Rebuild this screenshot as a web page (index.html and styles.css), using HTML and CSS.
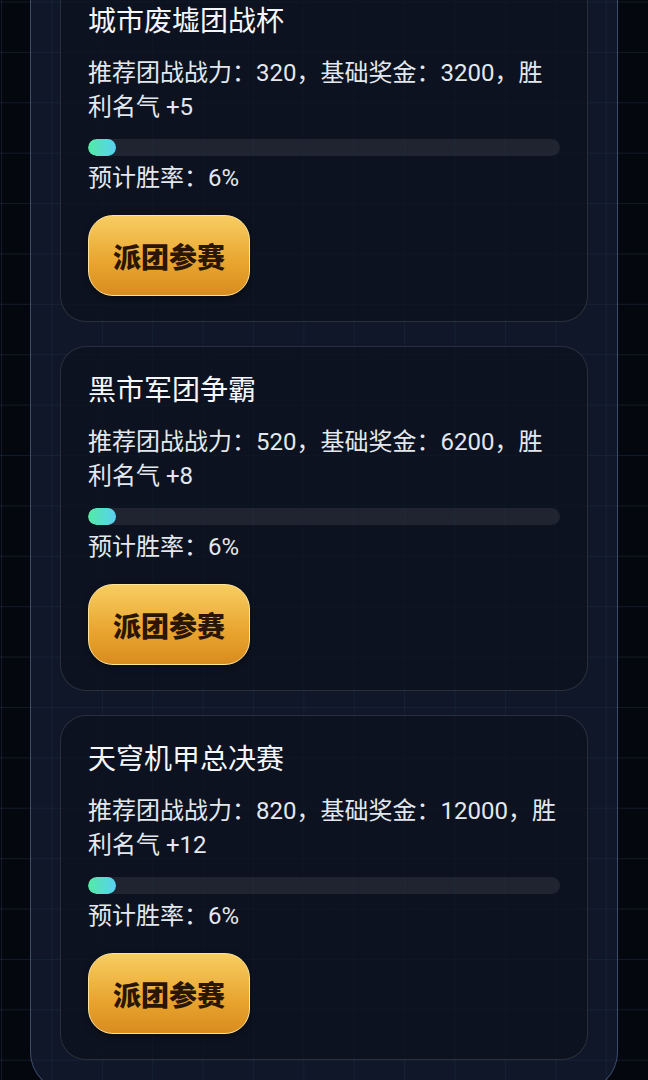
FILE: index.html
```html
<!DOCTYPE html>
<html lang="zh">
<head>
    <meta charset="UTF-8">
    <meta name="viewport" content="width=device-width, initial-scale=1.0">
    <title>团战赛事</title>
    <link rel="stylesheet" href="styles.css">
</head>
<body>
    <div class="panel">
        <div class="match-card">
            <h3 class="match-title">城市废墟团战杯</h3>
            <p class="match-desc">推荐团战战力：320，基础奖金：3200，胜利名气 +5</p>
            <div class="win-bar"><div class="win-fill" style="width: 6%"></div></div>
            <p class="win-rate">预计胜率：6%</p>
            <button class="join-btn">派团参赛</button>
        </div>

        <div class="match-card">
            <h3 class="match-title">黑市军团争霸</h3>
            <p class="match-desc">推荐团战战力：520，基础奖金：6200，胜利名气 +8</p>
            <div class="win-bar"><div class="win-fill" style="width: 6%"></div></div>
            <p class="win-rate">预计胜率：6%</p>
            <button class="join-btn">派团参赛</button>
        </div>

        <div class="match-card">
            <h3 class="match-title">天穹机甲总决赛</h3>
            <p class="match-desc">推荐团战战力：820，基础奖金：12000，胜利名气 +12</p>
            <div class="win-bar"><div class="win-fill" style="width: 6%"></div></div>
            <p class="win-rate">预计胜率：6%</p>
            <button class="join-btn">派团参赛</button>
        </div>
    </div>
</body>
</html>
```

FILE: styles.css
```css
html {
    background-color: #04070d;
    background-image:
        linear-gradient(to right, rgba(90, 120, 170, 0.17) 1px, transparent 1px),
        linear-gradient(to bottom, rgba(90, 120, 170, 0.17) 1px, transparent 1px);
    background-size: 50.4px 50.4px;
    background-position: 1px 1.5px;
}
body {
    margin: 0;
    font-family: Roboto, "Noto Sans CJK SC", sans-serif;
    color: #e3e8ef;
    overflow: hidden;
}
.panel {
    margin: -50px 30px 0;
    padding: 26px 29px 31px;
    border: 1px solid rgba(120, 150, 210, 0.42);
    border-radius: 40px;
    background: rgba(26, 40, 68, 0.5);
    display: flex;
    flex-direction: column;
    gap: 24px;
}
.match-card {
    padding: 24px 27px 25px;
    border: 1px solid rgba(255, 255, 255, 0.12);
    border-radius: 26px;
    background: rgba(10, 16, 28, 0.66);
}
.match-title {
    margin: 0 0 14px;
    font-size: 28px;
    line-height: 40px;
    font-weight: 400;
    color: #f5f7fb;
}
.match-desc {
    margin: 0;
    font-size: 24px;
    line-height: 34px;
}
.win-bar {
    margin-top: 15px;
    height: 17px;
    border-radius: 9px;
    background: rgba(255, 255, 255, 0.08);
    overflow: hidden;
}
.win-fill {
    height: 100%;
    border-radius: 9px;
    background: linear-gradient(to right, #52eba4, #5ad0f2);
}
.win-rate {
    margin: 5px 0 0;
    font-size: 24px;
    line-height: 34px;
}
.join-btn {
    margin-top: 20px;
    height: 81px;
    padding: 0 24px;
    border: 1.5px solid #ffe59c;
    border-radius: 25px;
    background: linear-gradient(to bottom, #f8cd62, #e8a42e 60%, #d98c1e);
    font-family: "Noto Sans CJK SC", sans-serif;
    font-size: 28px;
    font-weight: 900;
    color: #2b1505;
    box-shadow: 0 2px 6px rgba(0, 0, 0, 0.35);
}
```
